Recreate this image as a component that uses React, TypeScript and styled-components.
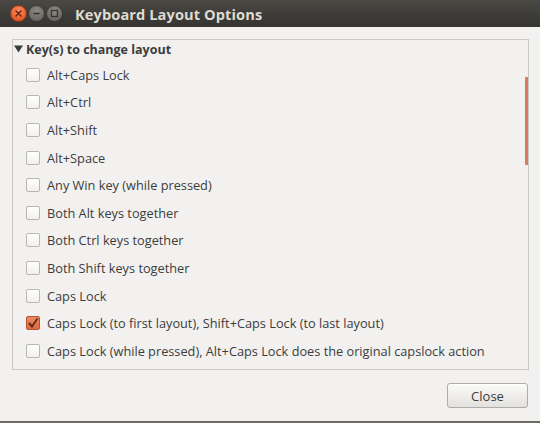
import React from "react";
import styled, { createGlobalStyle } from "styled-components";

const GlobalStyle = createGlobalStyle`
  html, body { margin: 0; padding: 0; background: #f2f1f0; }
  body { font-family: "Open Sans", "DejaVu Sans", sans-serif; }
  * { box-sizing: border-box; }
`;

const Window = styled.div`
  width: 540px;
  height: 423px;
  display: flex;
  flex-direction: column;
  background: #f2f1f0;
  border-bottom: 2px solid #6b6a67;
`;

const TitleBar = styled.div`
  height: 27px;
  flex: 0 0 27px;
  display: flex;
  align-items: center;
  padding-left: 10px;
  background: linear-gradient(#4a4944, #3c3b37 60%, #363531);
`;

const Controls = styled.div`
  display: flex;
  align-items: center;
  gap: 1px;
`;

const WinButton = styled.div<{ $kind: "close" | "plain" }>`
  width: 17px;
  height: 17px;
  border-radius: 50%;
  display: flex;
  align-items: center;
  justify-content: center;
  border: 1px solid ${(p) => (p.$kind === "close" ? "#8a3a22" : "#3a3935")};
  background: ${(p) =>
    p.$kind === "close"
      ? "radial-gradient(circle at 50% 35%, #f9906a, #e9622f 60%, #c9471f)"
      : "radial-gradient(circle at 50% 35%, #8c8b85, #6f6e68 60%, #5c5b56)"};
`;

const Title = styled.div`
  margin-left: 12px;
  color: #dfdbd2;
  font-family: "Open Sans", "DejaVu Sans", sans-serif;
  font-weight: 700;
  font-size: 14.6px;
  letter-spacing: 0.1px;
`;

const Body = styled.div`
  flex: 1;
  display: flex;
  flex-direction: column;
  padding: 12px 11px 0 12px;
`;

const Panel = styled.div`
  position: relative;
  height: 331px;
  border: 1px solid #cbc9c5;
  background: #f2f1f0;
  overflow: hidden;
`;

const ScrollThumb = styled.div`
  position: absolute;
  right: 0;
  top: 37px;
  width: 3px;
  height: 88px;
  background: #dc7c57;
`;

const Header = styled.div`
  height: 18px;
  display: flex;
  align-items: center;
  padding-left: 1px;
  gap: 3px;
  color: #3c3c3c;
  font-weight: 700;
  font-size: 12.5px;
`;

const List = styled.div`
  margin-top: 3px;
  display: flex;
  flex-direction: column;
`;

const Row = styled.div`
  height: 27.6px;
  display: flex;
  align-items: center;
  padding-left: 13px;
  gap: 6px;
  color: #3c3c3c;
  font-size: 12.75px;
  white-space: nowrap;
`;

const Box = styled.div<{ $checked?: boolean }>`
  width: 14px;
  height: 14px;
  flex: 0 0 14px;
  border-radius: 2px;
  display: flex;
  align-items: center;
  justify-content: center;
  border: 1px solid ${(p) => (p.$checked ? "#b4532f" : "#b9b7b3")};
  background: ${(p) =>
    p.$checked
      ? "linear-gradient(#ec8c62, #dd6a3d)"
      : "linear-gradient(#ffffff, #f1f0ee)"};
`;

const Label = styled.span`
  margin-left: 1px;
`;

const Footer = styled.div`
  flex: 1;
  display: flex;
  justify-content: flex-end;
  align-items: flex-start;
  padding-top: 13px;
  padding-right: 1px;
`;

const Button = styled.button`
  width: 81px;
  height: 25px;
  border: 1px solid #aeaca8;
  border-radius: 3px;
  background: linear-gradient(#fbfbfa, #efeeec 50%, #e2e1de);
  box-shadow: inset 0 1px 0 #ffffff;
  color: #3c3c3c;
  font-family: "Open Sans", "DejaVu Sans", sans-serif;
  font-size: 13px;
  padding: 0;
`;

const items: { label: string; checked?: boolean }[] = [
  { label: "Alt+Caps Lock" },
  { label: "Alt+Ctrl" },
  { label: "Alt+Shift" },
  { label: "Alt+Space" },
  { label: "Any Win key (while pressed)" },
  { label: "Both Alt keys together" },
  { label: "Both Ctrl keys together" },
  { label: "Both Shift keys together" },
  { label: "Caps Lock" },
  { label: "Caps Lock (to first layout), Shift+Caps Lock (to last layout)", checked: true },
  { label: "Caps Lock (while pressed), Alt+Caps Lock does the original capslock action" },
];

export default function App() {
  return (
    <>
      <GlobalStyle />
      <Window>
        <TitleBar>
          <Controls>
            <WinButton $kind="close">
              <svg width="9" height="9" viewBox="0 0 9 9">
                <path d="M2 2 L7 7 M7 2 L2 7" stroke="#6b2512" strokeWidth="1.6" strokeLinecap="round" />
              </svg>
            </WinButton>
            <WinButton $kind="plain">
              <svg width="9" height="9" viewBox="0 0 9 9">
                <path d="M1.5 4.5 L7.5 4.5" stroke="#34332f" strokeWidth="1.6" />
              </svg>
            </WinButton>
            <WinButton $kind="plain">
              <svg width="9" height="9" viewBox="0 0 9 9">
                <rect x="1.5" y="1.5" width="6" height="6" fill="none" stroke="#34332f" strokeWidth="1.3" />
              </svg>
            </WinButton>
          </Controls>
          <Title>Keyboard Layout Options</Title>
        </TitleBar>
        <Body>
          <Panel>
            <Header>
              <svg width="9" height="8" viewBox="0 0 9 8">
                <path d="M0 0.5 L9 0.5 L4.5 7.5 Z" fill="#3c3c3c" />
              </svg>
              <span>Key(s) to change layout</span>
            </Header>
            <List>
              {items.map((it) => (
                <Row key={it.label}>
                  <Box $checked={it.checked}>
                    {it.checked && (
                      <svg width="12" height="12" viewBox="0 0 12 12">
                        <path d="M2 6 L5 9.5 L10.5 1.5" fill="none" stroke="#6a2c16" strokeWidth="2" />
                      </svg>
                    )}
                  </Box>
                  <Label>{it.label}</Label>
                </Row>
              ))}
            </List>
            <ScrollThumb />
          </Panel>
          <Footer>
            <Button>Close</Button>
          </Footer>
        </Body>
      </Window>
    </>
  );
}
